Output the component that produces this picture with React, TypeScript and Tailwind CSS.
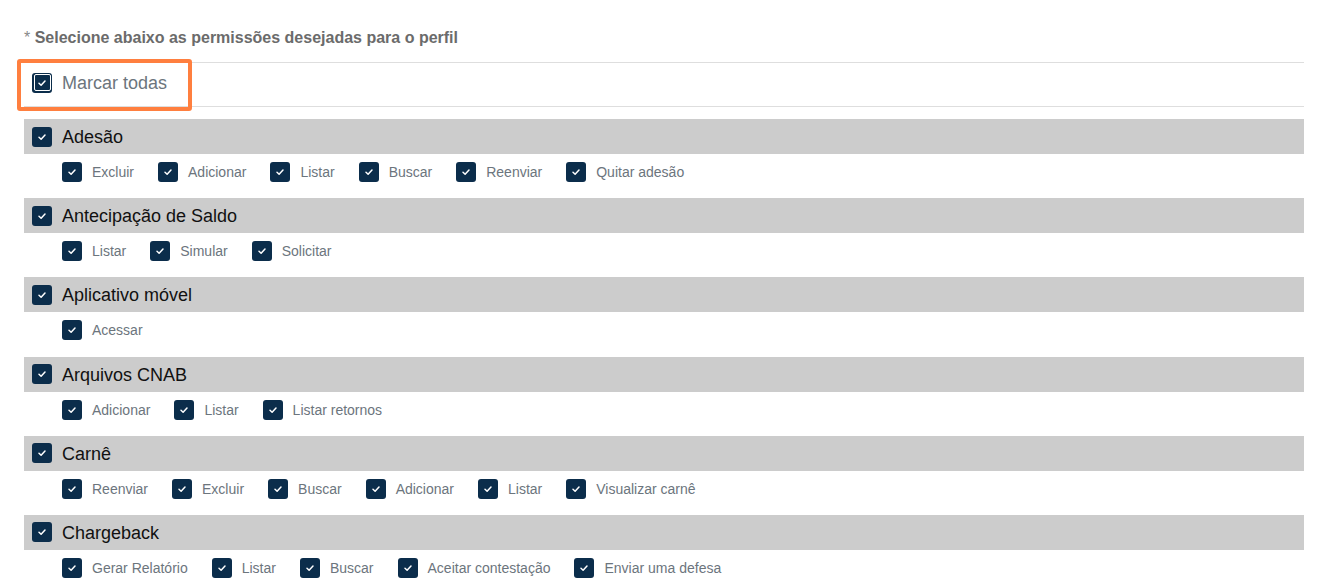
import React from 'react';

interface Group {
  title: string;
  items: string[];
}

const groups: Group[] = [
  { title: "Adesão", items: ["Excluir", "Adicionar", "Listar", "Buscar", "Reenviar", "Quitar adesão"] },
  { title: "Antecipação de Saldo", items: ["Listar", "Simular", "Solicitar"] },
  { title: "Aplicativo móvel", items: ["Acessar"] },
  { title: "Arquivos CNAB", items: ["Adicionar", "Listar", "Listar retornos"] },
  { title: "Carnê", items: ["Reenviar", "Excluir", "Buscar", "Adicionar", "Listar", "Visualizar carnê"] },
  { title: "Chargeback", items: ["Gerar Relatório", "Listar", "Buscar", "Aceitar contestação", "Enviar uma defesa"] },
];

const Tick = () => (
  <svg width="10" height="10" viewBox="0 0 10 10" fill="none">
    <path d="M2 5.3 L4.1 7.2 L8 3" stroke="#fff" strokeWidth="1.5" strokeLinecap="round" strokeLinejoin="round" />
  </svg>
);

const Box = () => (
  <span className="w-5 h-5 shrink-0 rounded-[3px] bg-[#0b2d4b] flex items-center justify-center">
    <Tick />
  </span>
);

const App: React.FC = () => {
  return (
    <div className="w-[1325px] h-[586px] bg-white overflow-hidden font-['Liberation_Sans',Arial,sans-serif]">
      <div className="ml-6 w-[1280px] pt-[27px]">
        <p className="text-base font-bold text-[#6b6b6b] leading-[22px] mb-[13px]">
          <span className="font-normal text-[#888]">*</span> Selecione abaixo as permissões desejadas para o perfil
        </p>

        {/* Marcar todas */}
        <div className="relative border-t border-b border-[#dedede] h-[45px] flex items-center pl-2 pb-1">
          <span className="w-5 h-5 rounded-[3px] bg-[#0b2d4b] p-[1.5px] flex">
            <span className="flex-1 rounded-[2px] border border-white flex items-center justify-center">
              <Tick />
            </span>
          </span>
          <span className="ml-[10px] text-lg text-[#6c757d]">Marcar todas</span>
          <div className="absolute left-[-7px] top-[-4px] w-[175px] h-[52px] border-4 border-[#ff7f3f] rounded-[3px]" />
        </div>

        <div className="mt-[12px]">
          {groups.map((g) => (
            <div key={g.title}>
              <div className="h-[35px] bg-[#cccccc] flex items-center pl-2">
                <Box />
                <span className="ml-[10px] text-lg text-[#111] pt-[1px]">{g.title}</span>
              </div>
              <div className="flex pl-[38px] pt-[8px] pb-[16.2px] gap-x-[24px]">
                {g.items.map((it) => (
                  <label key={it} className="flex items-center">
                    <Box />
                    <span className="ml-[10px] text-sm text-[#6c757d] leading-5">{it}</span>
                  </label>
                ))}
              </div>
            </div>
          ))}
        </div>
      </div>
    </div>
  );
};

export default App;
